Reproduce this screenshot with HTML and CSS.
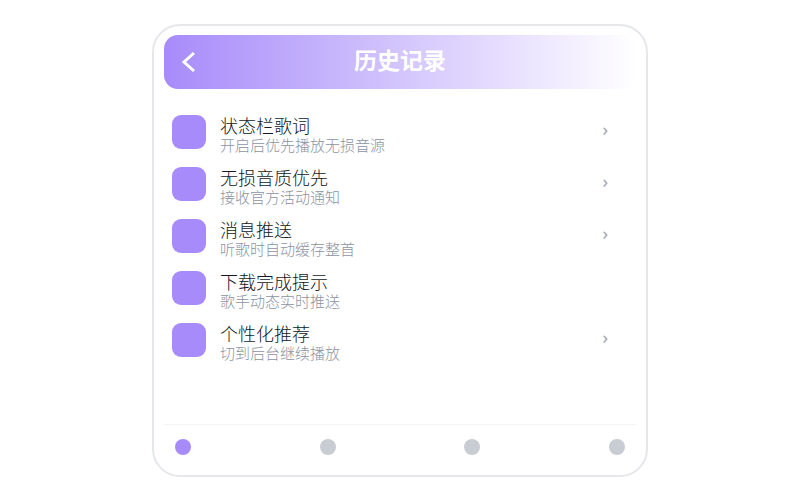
FILE: index.html
```html
<!DOCTYPE html>
<html lang="zh-CN">
<head>
<meta charset="UTF-8" />
<meta name="viewport" content="width=device-width, initial-scale=1" />
<title>历史记录</title>
<link rel="stylesheet" href="styles.css">
</head>
<body>

<div class="panel">
  <header class="panel-header">
    <button type="button" class="back-btn" aria-label="返回">
      <svg width="14" height="22" viewBox="0 0 14 22" fill="none" stroke="currentColor" stroke-width="3">
        <path d="M13 2 L3 11 L13 20" />
      </svg>
    </button>
    <h1 class="panel-title">历史记录</h1>
  </header>

  <main class="item-list">
    <a class="item" href="#lyrics">
      <span class="item-icon"></span>
      <span class="item-text">
        <span class="item-title">状态栏歌词</span>
        <span class="item-desc">开启后优先播放无损音源</span>
      </span>
      <span class="item-arrow">›</span>
    </a>
    <a class="item" href="#quality">
      <span class="item-icon"></span>
      <span class="item-text">
        <span class="item-title">无损音质优先</span>
        <span class="item-desc">接收官方活动通知</span>
      </span>
      <span class="item-arrow">›</span>
    </a>
    <a class="item" href="#push">
      <span class="item-icon"></span>
      <span class="item-text">
        <span class="item-title">消息推送</span>
        <span class="item-desc">听歌时自动缓存整首</span>
      </span>
      <span class="item-arrow">›</span>
    </a>
    <div class="item">
      <span class="item-icon"></span>
      <span class="item-text">
        <span class="item-title">下载完成提示</span>
        <span class="item-desc">歌手动态实时推送</span>
      </span>
    </div>
    <a class="item" href="#recommend">
      <span class="item-icon"></span>
      <span class="item-text">
        <span class="item-title">个性化推荐</span>
        <span class="item-desc">切到后台继续播放</span>
      </span>
      <span class="item-arrow">›</span>
    </a>
  </main>

  <nav class="tab-bar">
    <button type="button" class="tab-dot active" aria-label="标签 1"></button>
    <button type="button" class="tab-dot" aria-label="标签 2"></button>
    <button type="button" class="tab-dot" aria-label="标签 3"></button>
    <button type="button" class="tab-dot" aria-label="标签 4"></button>
  </nav>
</div>

</body>
</html>
```
FILE: styles.css
```css
* {
  box-sizing: border-box;
}
body {
  margin: 0;
  padding: 24px 0 23px;
  min-height: 100vh;
  display: flex;
  justify-content: center;
  font-family: "Noto Sans CJK SC", sans-serif;
  background: #fff;
}
.panel {
  width: 62%;
  display: flex;
  flex-direction: column;
  padding: 9px 10px;
  border: 2px solid #e5e7eb;
  border-radius: 28px;
}
.panel-header {
  display: grid;
  grid-template-columns: 48px 1fr 48px;
  align-items: center;
  height: 54px;
  border-radius: 14px;
  background: linear-gradient(90deg, #a78bfa, #fff);
  color: #fff;
}
.back-btn {
  display: flex;
  justify-content: center;
  padding: 0;
  border: none;
  background: none;
  color: inherit;
}
.panel-title {
  margin: 0;
  padding-bottom: 6px;
  font-size: 23px;
  line-height: 32px;
  font-weight: 700;
  text-align: center;
}
.item-list {
  flex: 1;
  display: flex;
  flex-direction: column;
  gap: 6px;
  padding: 20px 28px 24px 8px;
}
.item {
  display: flex;
  align-items: center;
  gap: 14px;
  color: inherit;
  text-decoration: none;
}
.item-icon {
  width: 34px;
  height: 34px;
  border-radius: 9px;
  background: #a78bfa;
}
.item-text {
  flex: 1;
  display: flex;
  flex-direction: column;
  padding-top: 6px;
  font-weight: 300;
}
.item-title {
  font-size: 18px;
  line-height: 20px;
  color: #111827;
}
.item-desc {
  font-size: 15px;
  line-height: 20px;
  color: #8b93a1;
}
.item-arrow {
  padding-bottom: 6px;
  font-family: "Noto Sans", sans-serif;
  font-size: 18px;
  line-height: 20px;
  color: #9ca3af;
}
.tab-bar {
  display: flex;
  justify-content: space-between;
  padding: 14px 11px 11px;
  border-top: 1px solid #f3f4f6;
}
.tab-dot {
  width: 16px;
  height: 16px;
  padding: 0;
  border: none;
  border-radius: 50%;
  background: #c8cdd3;
}
.tab-dot.active {
  background: #a78bfa;
}
```
